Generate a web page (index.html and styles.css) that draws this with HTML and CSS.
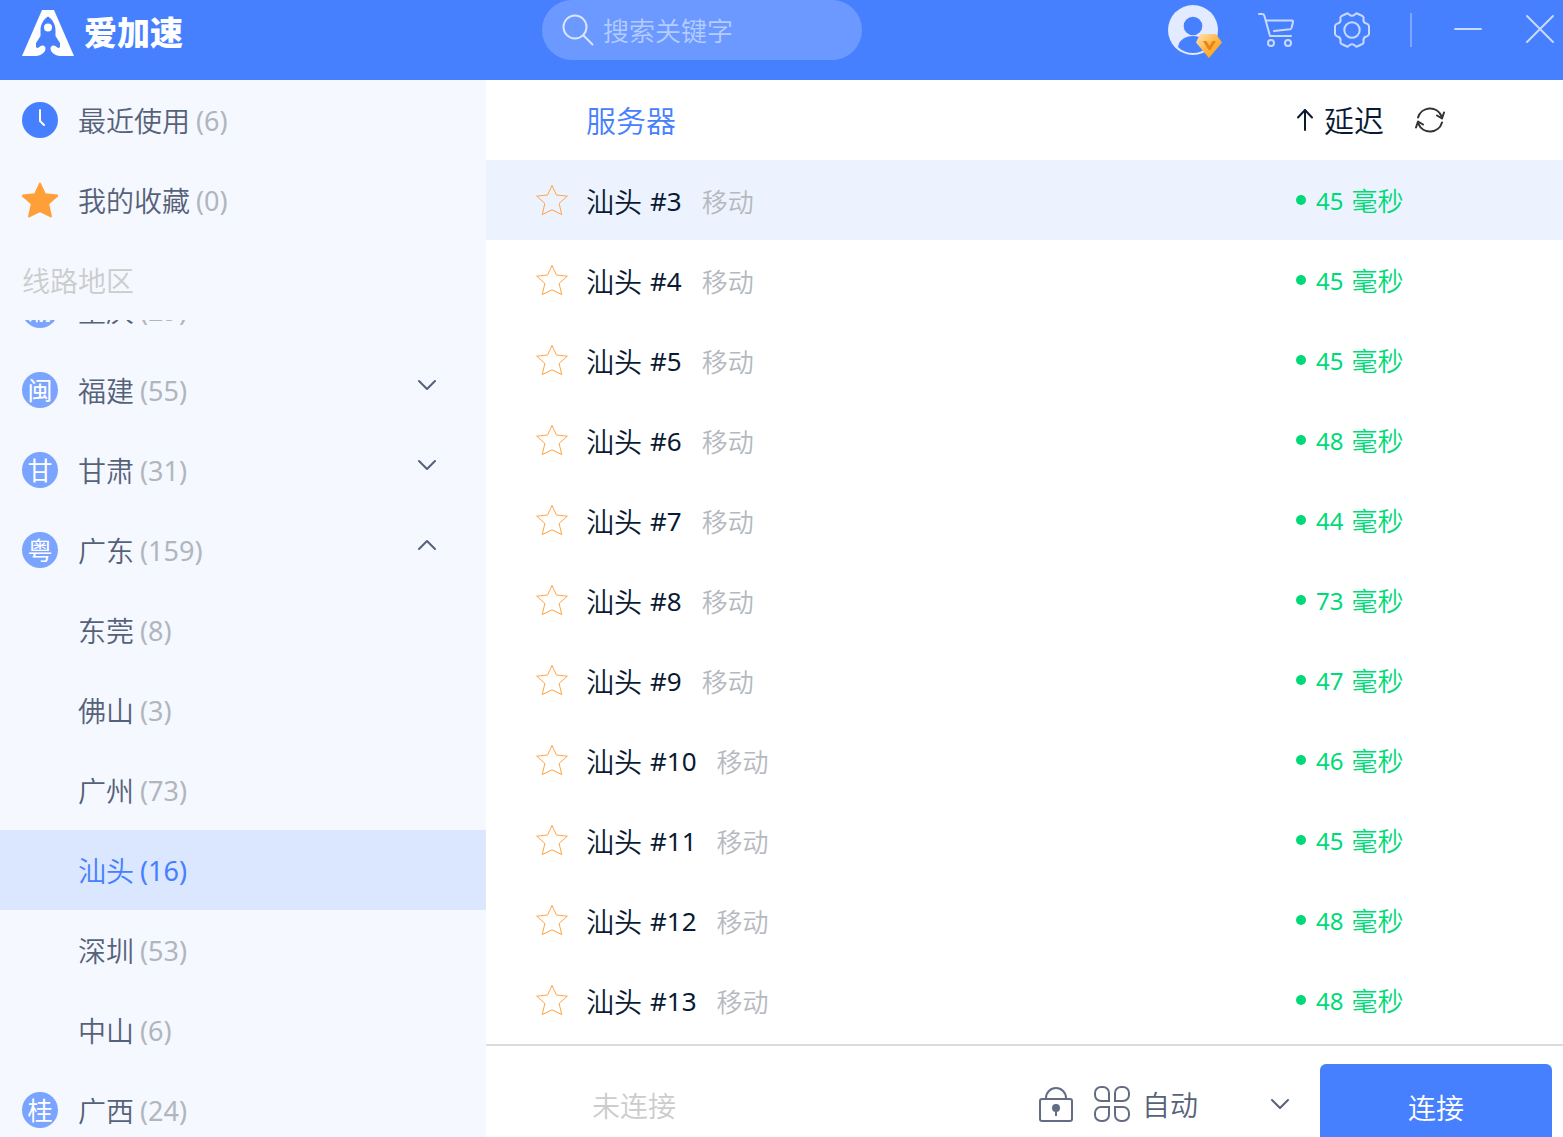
FILE: index.html
```html
<!DOCTYPE html>
<html lang="zh-CN">
<head>
<meta charset="utf-8">
<meta name="viewport" content="width=device-width, initial-scale=1">
<title>爱加速</title>
<link rel="stylesheet" href="styles.css">
</head>
<body>
<svg class="sprite" aria-hidden="true">
  <symbol id="star" viewBox="1 1 34 34"><path d="M18 2.500l4.700 10.200 11.600 1.200-8.700 7.700 2.700 11.900-10.300-5.100-10.300 5.100 2.700-11.900-8.700-7.700 11.600-1.200z" stroke-linejoin="round"/></symbol>
  <symbol id="chevron" viewBox="0 0 20 12"><path d="M2 2l8 8 8-8" fill="none" stroke="currentColor" stroke-width="2" stroke-linecap="round" stroke-linejoin="round"/></symbol>
</svg>
<div class="app">
  <header class="topbar">
    <div class="brand">
      <svg class="brand-mark" viewBox="0 0 52 46" aria-hidden="true">
        <path fill="#fff" d="M20 0h12l20 46H38C33 46 28.500 42 28.500 38.500C28.500 35.500 32 34.500 34 36.500C35.500 38 38 39 38 36L38 33L33.500 26V20C33.500 14 30 9 26 6.500C22 9 18.500 14 18.500 20V26L14 33V36C14 39 16.500 38 18 36.500C20 34.500 23.500 35.500 23.500 38.500C23.500 42 19 46 14 46H0z"/>
        <circle cx="26" cy="17.500" r="4" fill="#fff"/>
      </svg>
      <span class="brand-name">爱加速</span>
    </div>
    <label class="search">
      <svg class="search-icon" viewBox="0 0 32 32" fill="none" stroke="#dae5ff" stroke-width="2" stroke-linecap="round" aria-hidden="true"><circle cx="13" cy="13" r="11.500"/><path d="M21.500 21.500l9 9"/></svg>
      <input class="search-input" type="text" placeholder="搜索关键字" aria-label="搜索关键字">
    </label>
    <div class="tools">
      <button class="tool avatar" type="button" aria-label="账户">
        <svg viewBox="0 0 54 54" width="54" height="54" aria-hidden="true">
          <defs><linearGradient id="gold" x1="0" y1="0" x2="1" y2="1"><stop offset="0" stop-color="#ffe4ba"/><stop offset=".55" stop-color="#ffb43a"/><stop offset="1" stop-color="#ff9d0c"/></linearGradient></defs>
          <circle cx="25" cy="25" r="25" fill="#e2ebff"/>
          <circle cx="25" cy="21" r="9.300" fill="#4680ff"/>
          <path d="M10 42c1-7 7-11 15-11s14 4 15 11c-8 8-22 8-30 0z" fill="#4680ff"/>
          <path d="M32 29h16l6 8.500-13 15.500-13-15.500z" fill="url(#gold)"/>
          <path d="M35 36h3.500l3 5 3-5H48l-5.500 9h-2z" fill="#e9831a"/>
        </svg>
      </button>
      <button class="tool" type="button" aria-label="购物车">
        <svg viewBox="0 0 36 36" width="36" height="36" fill="none" stroke="#c8d9ff" stroke-width="2" stroke-linecap="round" stroke-linejoin="round" aria-hidden="true"><path d="M1 2h3c1.500 0 2 .5 2.300 1.500L12 24h21M7.500 8.500H34c1 0 1.300.6 1 1.500l-1.500 6c-.3 1-.8 1.200-1.500 1.300l-16 1.800"/><circle cx="13" cy="31" r="3"/><circle cx="30" cy="31" r="3"/></svg>
      </button>
      <button class="tool" type="button" aria-label="设置">
        <svg viewBox="0 0 36 36" width="36" height="36" fill="none" stroke="#c8d9ff" stroke-width="2" stroke-linejoin="round" aria-hidden="true"><path d="M13 1.500Q14 1 15 2.500Q18 5 21 2.500Q22 1 23 1.500L28.500 4Q30 5 29.500 6.500Q29 11 32.500 11.500Q34.500 12 35 14V22Q34.500 24 32.500 24.500Q29 25 29.500 29.500Q30 31 28.500 32L23 34.500Q22 35 21 33.500Q18 31 15 33.500Q14 35 13 34.500L7.500 32Q6 31 6.500 29.500Q7 25 3.500 24.500Q1.500 24 1 22V14Q1.500 12 3.500 11.500Q7 11 6.500 6.500Q6 5 7.500 4Z"/><circle cx="18" cy="18" r="7.700"/></svg>
      </button>
      <span class="divider"></span>
      <button class="tool" type="button" aria-label="最小化">
        <svg viewBox="0 0 32 32" width="32" height="32" stroke="#c8d9ff" stroke-width="2" stroke-linecap="round" aria-hidden="true"><path d="M3 15h26"/></svg>
      </button>
      <button class="tool" type="button" aria-label="关闭">
        <svg viewBox="0 0 32 32" width="32" height="32" stroke="#c8d9ff" stroke-width="2" stroke-linecap="round" aria-hidden="true"><path d="M3 2l26 26M29 2L3 28"/></svg>
      </button>
    </div>
  </header>

  <nav class="sidebar">
    <a class="item" href="#recent">
      <svg class="item-icon" viewBox="0 0 36 36" aria-hidden="true"><circle cx="18" cy="18" r="18" fill="#4680ff"/><path d="M18 8v11l4 4" fill="none" stroke="#fff" stroke-width="2" stroke-linecap="round" stroke-linejoin="round"/></svg>
      <span class="label">最近使用</span><span class="count">(6)</span>
    </a>
    <a class="item" href="#favorites">
      <svg class="item-icon favorite" aria-hidden="true"><use href="#star"/></svg>
      <span class="label">我的收藏</span><span class="count">(0)</span>
    </a>
    <h2 class="section label">线路地区</h2>
    <div class="regions">
      <div class="region-list">
        <a class="item" href="#cq"><span class="badge">渝</span><span class="label">重庆</span><span class="count">(29)</span></a>
        <a class="item" href="#fj"><span class="badge">闽</span><span class="label">福建</span><span class="count">(55)</span><svg class="chevron" aria-hidden="true"><use href="#chevron"/></svg></a>
        <a class="item" href="#gs"><span class="badge">甘</span><span class="label">甘肃</span><span class="count">(31)</span><svg class="chevron" aria-hidden="true"><use href="#chevron"/></svg></a>
        <a class="item" href="#gd"><span class="badge">粤</span><span class="label">广东</span><span class="count">(159)</span><svg class="chevron open" aria-hidden="true"><use href="#chevron"/></svg></a>
        <a class="item city" href="#dg"><span class="label">东莞</span><span class="count">(8)</span></a>
        <a class="item city" href="#fs"><span class="label">佛山</span><span class="count">(3)</span></a>
        <a class="item city" href="#gz"><span class="label">广州</span><span class="count">(73)</span></a>
        <a class="item city selected" href="#st"><span class="label">汕头</span><span class="count">(16)</span></a>
        <a class="item city" href="#sz"><span class="label">深圳</span><span class="count">(53)</span></a>
        <a class="item city" href="#zs"><span class="label">中山</span><span class="count">(6)</span></a>
        <a class="item" href="#gx"><span class="badge">桂</span><span class="label">广西</span><span class="count">(24)</span></a>
      </div>
    </div>
  </nav>

  <main class="content">
    <div class="servers">
      <table class="table">
        <thead>
          <tr>
            <th class="col-name" scope="col"><div class="label">服务器</div></th>
            <th class="col-delay" scope="col">
              <div class="delay-head">
                <svg viewBox="0 0 18 24" width="18" height="24" fill="none" stroke="#0a1a33" stroke-width="2" stroke-linecap="round" stroke-linejoin="round" aria-hidden="true"><path d="M9 22V2M2 9.500L9 2l7 7.500"/></svg>
                <span class="label">延迟</span>
                <button class="refresh" type="button" aria-label="刷新">
                  <svg viewBox="0 0 30 28" width="30" height="28" fill="none" stroke="#333" stroke-width="2" stroke-linecap="round" stroke-linejoin="round" aria-hidden="true"><path d="M3 11.500A12.500 12.500 0 0 1 26.500 10M22 9.500l5 3 2-6M27 16.500A12.500 12.500 0 0 1 3.500 18M1 21.500l2-6 5 3"/></svg>
                </button>
              </div>
            </th>
          </tr>
        </thead>
        <tbody id="rows"></tbody>
      </table>
    </div>
    <footer class="statusbar">
      <span class="status">未连接</span>
      <div class="mode">
        <svg viewBox="0 0 34 36" width="34" height="36" fill="none" stroke="#626d84" stroke-width="2" aria-hidden="true"><rect x="1" y="13" width="32" height="22" rx="2"/><path d="M7 13v-1a10 10 0 0 1 20 0v1M17 23v7"/><circle cx="17" cy="22" r="4" fill="#626d84" stroke="none"/></svg>
        <button class="mode-select" type="button">
          <svg viewBox="0 0 36 36" width="36" height="36" fill="none" stroke="#626d84" stroke-width="2" aria-hidden="true"><path d="M7 1h2a6 6 0 0 1 6 6v8H7a6 6 0 0 1-6-6V7a6 6 0 0 1 6-6zM27 1h2a6 6 0 0 1 6 6v2a6 6 0 0 1-6 6h-8V7a6 6 0 0 1 6-6zM7 21h8v8a6 6 0 0 1-6 6H7a6 6 0 0 1-6-6v-2a6 6 0 0 1 6-6zM21 21h8a6 6 0 0 1 6 6v2a6 6 0 0 1-6 6h-2a6 6 0 0 1-6-6z"/></svg>
          <span class="label">自动</span>
          <svg class="chevron" aria-hidden="true"><use href="#chevron"/></svg>
        </button>
      </div>
      <button class="connect" type="button">连接</button>
    </footer>
  </main>
</div>
<script src="app.js"></script>
</body>
</html>
```
FILE: styles.css
```css
* {
  box-sizing: border-box;
}

body {
  margin: 0;
  font-family: "Noto Sans", "Noto Sans CJK SC", sans-serif;
  font-size: 28px;
  font-weight: 350;
  line-height: 40px;
  color: #566279;
}

button {
  padding: 0;
  border: 0;
  background: none;
  color: inherit;
  font: inherit;
  cursor: pointer;
}

svg {
  display: block;
  flex: none;
}

.sprite {
  display: none;
}

.app {
  display: grid;
  grid-template: 80px minmax(0, 1fr) / 486px minmax(0, 1fr);
  height: 100vh;
  overflow: hidden;
}

/* Labels sit slightly below the centre line of their row */
.label,
.count,
.number,
.delay-value {
  padding-top: 2px;
}

/* Top bar */

.topbar {
  grid-column: 1 / -1;
  display: flex;
  padding: 0 7px 20px 22px;
  background: #4680ff;
}

.brand {
  display: flex;
  align-items: center;
  gap: 10px;
  width: 520px;
  padding-top: 6px;
}

.brand-mark {
  width: 52px;
  height: 46px;
}

.brand-name {
  color: #fff;
  font-size: 33px;
  font-weight: 900;
}

.search {
  display: flex;
  align-items: center;
  gap: 9px;
  width: 320px;
  padding: 0 20px;
  border-radius: 30px;
  background: #6c99ff;
}

.search-icon {
  width: 32px;
  height: 32px;
}

.search-input {
  flex: 1;
  min-width: 0;
  padding: 2px 0 0;
  border: 0;
  outline: 0;
  background: none;
  color: #fff;
  font: inherit;
  font-size: 26px;
}

.search-input::placeholder {
  color: #b5ccff;
}

.tools {
  display: flex;
  align-items: center;
  gap: 40px;
  margin-left: auto;
}

.avatar {
  width: 50px;
  height: 50px;
}

.divider {
  width: 2px;
  height: 34px;
  background: #7ea6ff;
}

/* Sidebar */

.sidebar {
  display: flex;
  flex-direction: column;
  min-height: 0;
  background: #f5f8ff;
}

.item {
  display: flex;
  align-items: center;
  height: 80px;
  padding: 0 49px 0 22px;
  color: inherit;
  text-decoration: none;
}

.item-icon,
.badge {
  flex: none;
  width: 36px;
  height: 36px;
  margin-right: 20px;
}

.favorite {
  fill: #ff9f38;
  stroke: #ff9f38;
  stroke-width: 2px;
}

.badge {
  border-radius: 50%;
  background: #7ba4ff;
  color: #fff;
  font-size: 25px;
  font-weight: 400;
  line-height: 36px;
  text-align: center;
}

.count {
  margin-left: 6px;
  color: #b0b6bd;
  font-size: 27px;
  font-weight: 400;
}

.city {
  padding-left: 78px;
}

.selected,
.selected .count {
  color: #4680ff;
}

.item.selected {
  background: #dbe6ff;
}

.section {
  flex: none;
  height: 80px;
  margin: 0;
  padding-left: 22px;
  color: #ccc;
  font-size: 28px;
  font-weight: 350;
  line-height: 78px;
}

.regions {
  flex: 1;
  min-height: 0;
  overflow: hidden;
}

/* The list rests part-way through its first row */
.region-list {
  margin-top: -50px;
}

.chevron {
  width: 20px;
  height: 12px;
  margin-left: auto;
  color: #566279;
}

.item .chevron {
  margin-bottom: 10px;
}

.open {
  transform: rotate(180deg);
}

/* Server table */

.content {
  display: flex;
  flex-direction: column;
  min-width: 0;
  min-height: 0;
  background: #fff;
}

.servers {
  flex: 1;
  min-height: 0;
  overflow: hidden;
}

.table {
  width: 100%;
  border-collapse: collapse;
  table-layout: fixed;
}

.table th,
.table td {
  height: 80px;
  padding: 0;
  text-align: left;
  vertical-align: middle;
}

.table th {
  color: #0a1a33;
  font-size: 30px;
  font-weight: 350;
}

.table .col-name {
  padding-left: 100px;
  color: #4680ff;
}

.col-delay {
  width: 267px;
}

.delay-head,
.server,
.delay {
  display: flex;
  align-items: center;
}

.delay-head svg {
  margin-right: 10px;
}

.refresh {
  margin-left: 31px;
}

.current {
  background: #ecf3ff;
}

.server {
  padding-left: 50px;
  color: #0a1a33;
}

.server .label {
  padding-top: 4px;
}

.star {
  width: 32px;
  height: 32px;
  margin-right: 18px;
  fill: none;
  stroke: #ff9f38;
  stroke-width: 1px;
}

.star svg {
  width: 32px;
  height: 32px;
}

.number {
  margin-left: 8px;
  font-size: 26px;
  font-weight: 400;
}

.carrier {
  margin-left: 20px;
  color: #b5b9be;
  font-size: 26px;
}

.delay {
  color: #00d977;
  font-size: 26px;
}

.delay::before {
  content: "";
  width: 10px;
  height: 10px;
  margin-right: 10px;
  border-radius: 50%;
  background: #00d977;
}

.delay-value {
  margin-right: 8px;
  font-size: 24px;
  font-weight: 400;
}

/* Status bar */

.statusbar {
  flex: none;
  display: flex;
  height: 93px;
  padding: 18px 11px 0 106px;
  border-top: 2px solid #dcdcdc;
  overflow: hidden;
}

.status {
  line-height: 84px;
  color: #ccc;
}

.mode,
.mode-select {
  display: flex;
  align-items: center;
  height: 80px;
}

.mode {
  gap: 21px;
  margin-left: auto;
}

.mode-select {
  gap: 12px;
  width: 196px;
}

.connect {
  width: 232px;
  height: 88px;
  margin-left: 30px;
  border-radius: 6px;
  background: #4680ff;
  color: #fff;
}
```
FILE: app.js
```js
const servers = [
  [3, 45], [4, 45], [5, 45], [6, 48], [7, 44], [8, 73],
  [9, 47], [10, 46], [11, 45], [12, 48], [13, 48]
];

document.getElementById("rows").innerHTML = servers.map(([number, delay], index) => `
  <tr class="${index === 0 ? "current" : ""}">
    <td><div class="server">
      <button class="star" type="button" aria-label="收藏"><svg aria-hidden="true"><use href="#star"/></svg></button>
      <span class="label">汕头</span><span class="number">#${number}</span><span class="carrier label">移动</span>
    </div></td>
    <td><div class="delay"><span class="delay-value">${delay}</span><span class="label">毫秒</span></div></td>
  </tr>`).join("");
```
